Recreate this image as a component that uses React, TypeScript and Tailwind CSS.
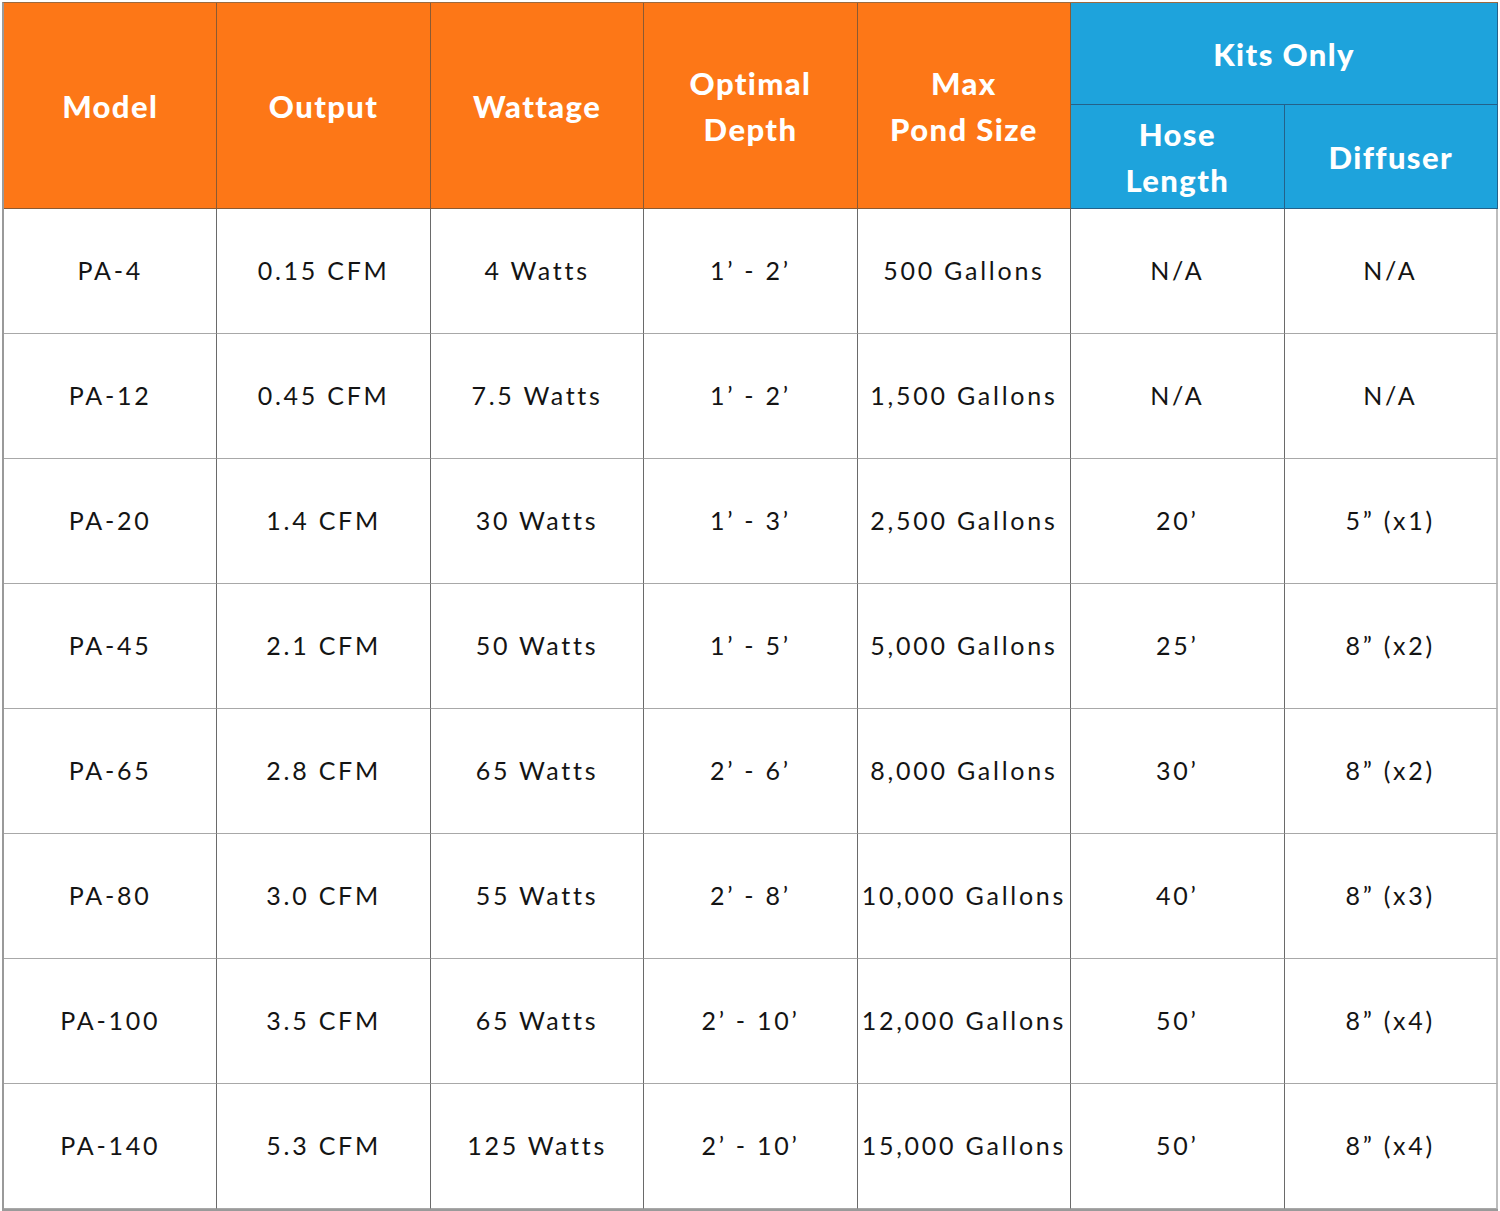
const ROWS: string[][] = [
  ["PA-4", "0.15 CFM", "4 Watts", "1’ - 2’", "500 Gallons", "N/A", "N/A"],
  ["PA-12", "0.45 CFM", "7.5 Watts", "1’ - 2’", "1,500 Gallons", "N/A", "N/A"],
  ["PA-20", "1.4 CFM", "30 Watts", "1’ - 3’", "2,500 Gallons", "20’", "5” (x1)"],
  ["PA-45", "2.1 CFM", "50 Watts", "1’ - 5’", "5,000 Gallons", "25’", "8” (x2)"],
  ["PA-65", "2.8 CFM", "65 Watts", "2’ - 6’", "8,000 Gallons", "30’", "8” (x2)"],
  ["PA-80", "3.0 CFM", "55 Watts", "2’ - 8’", "10,000 Gallons", "40’", "8” (x3)"],
  ["PA-100", "3.5 CFM", "65 Watts", "2’ - 10’", "12,000 Gallons", "50’", "8” (x4)"],
  ["PA-140", "5.3 CFM", "125 Watts", "2’ - 10’", "15,000 Gallons", "50’", "8” (x4)"],
];

const head = "flex items-center justify-center text-center text-white font-black text-[31px] leading-[46px] tracking-[0.045em]";
const orange = `${head} bg-[#fd7717] row-span-2 border-r border-b border-[#8a5a33]`;
const blue = `${head} bg-[#1ea3dc] border-r border-b border-[#24618a]`;

export default function App() {
  return (
    <div className="w-[1500px] h-[1211px] bg-white pl-[2px] pt-[2px] font-['Lato',sans-serif]">
      <div className="grid w-[1496px] grid-cols-[repeat(7,1fr)] grid-rows-[102px_104px_repeat(8,125px)] border-l-2 border-t border-l-[#9a9a9a] border-t-[#9a6a40] border-b-2 border-b-[#9a9a9a]">
        <div className={orange}>Model</div>
        <div className={orange}>Output</div>
        <div className={orange}>Wattage</div>
        <div className={orange}>Optimal<br />Depth</div>
        <div className={orange}>Max<br />Pond Size</div>
        <div className={`${blue} col-span-2`}>Kits Only</div>
        <div className={blue}>Hose<br />Length</div>
        <div className={blue}>Diffuser</div>
        {ROWS.map((row, i) =>
          row.map((cell, j) => (
            <div
              key={`${i}-${j}`}
              className={`flex items-center justify-center text-[25px] tracking-[0.11em] text-[#141414] border-b border-[#a8a8a8] ${
                j === 6 ? "border-r-2 border-r-[#bdbdbd]" : "border-r border-r-[#6a6a6a]"
              }`}
            >
              {cell}
            </div>
          ))
        )}
      </div>
    </div>
  );
}
